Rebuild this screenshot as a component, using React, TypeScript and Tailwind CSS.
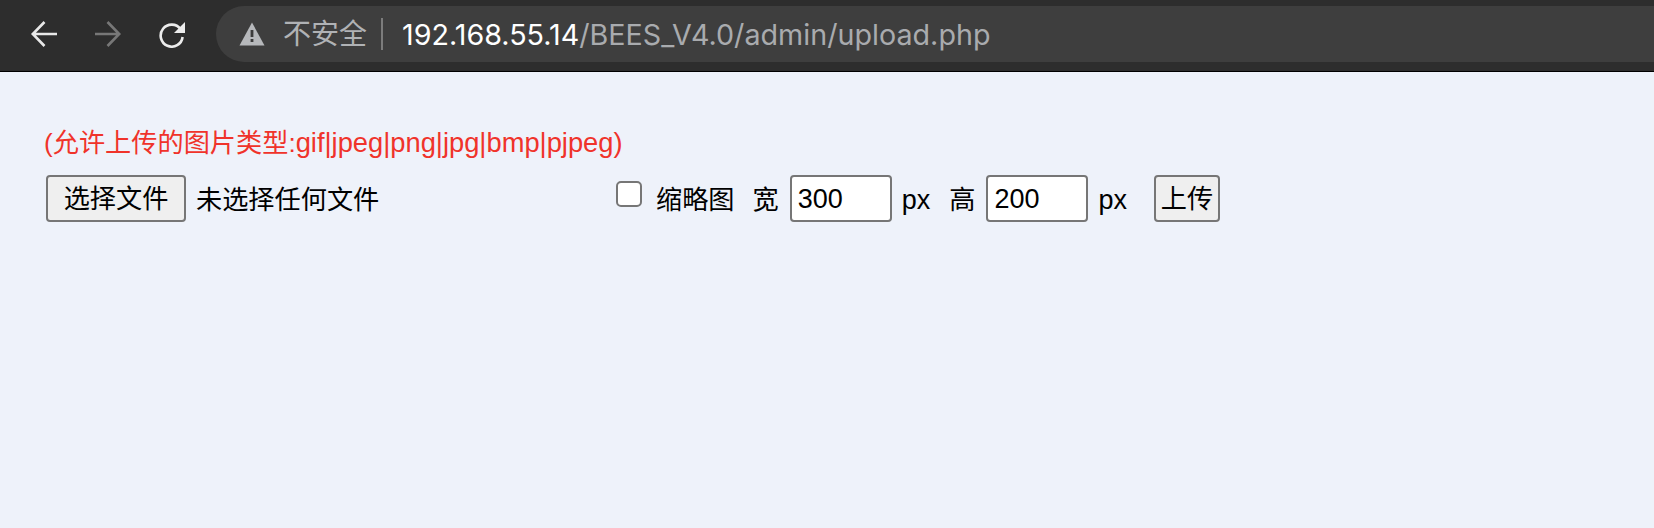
const cjk = "font-['Liberation_Sans','Noto_Sans_CJK_SC',sans-serif]";
const url = "font-['Inter','Liberation_Sans',sans-serif]";
const control = "h-[47px] rounded-[4px] border-2 border-[#767676]";

function Arrow({ flip, color }: { flip?: boolean; color: string }) {
  return (
    <svg viewBox="0 0 28 28" className={`h-7 w-7 ${flip ? "-scale-x-100" : ""}`} fill="none" stroke={color} strokeWidth="2.6">
      <path d="M27 14H3M14.5 2 2.8 14l11.7 12" />
    </svg>
  );
}

function Reload() {
  return (
    <svg viewBox="0 0 28 28" className="h-7 w-7" fill="none">
      <path d="M22.6 9.2A11 11 0 1 0 24.6 17" stroke="#ececec" strokeWidth="2.6" />
      <path d="M27 2v11H16z" fill="#ececec" />
    </svg>
  );
}

function Warning() {
  return (
    <svg viewBox="0 0 26 24" className="h-6 w-[26px]">
      <path d="M13 0.5 25.5 23.5H0.5z" fill="#b6b8bb" />
      <path d="M11.6 8h2.8v7h-2.8zM11.6 17h2.8v3h-2.8z" fill="#3c3c3c" />
    </svg>
  );
}

function Toolbar() {
  return (
    <header className="flex h-[72px] items-start border-b border-black bg-[#2d2d2d] pt-[6px]">
      <div className="flex h-[56px] w-[216px] shrink-0 items-center">
        <span className="ml-[30px] flex"><Arrow color="#e8e8e8" /></span>
        <span className="ml-[36px] flex"><Arrow flip color="#777777" /></span>
        <span className="ml-[36px] flex"><Reload /></span>
      </div>
      <div className="flex h-[56px] flex-1 items-center rounded-l-[28px] bg-[#3e3e3e] pl-[23px]">
        <Warning />
        <span className={`ml-[18px] pt-[2px] text-[28px] leading-none text-[#b0b2b5] ${cjk}`}>不安全</span>
        <span className="ml-[14px] h-8 w-[2px] bg-[#7c7c7c]" />
        <span className={`ml-[19px] pt-[2px] text-[28.7px] leading-none text-[#a9abae] ${url}`}>
          <span className="text-white">192.168.55.14</span>/BEES_V4.0/admin/upload.php
        </span>
      </div>
    </header>
  );
}

function UploadForm() {
  return (
    <main className={`flex-1 bg-[#eef2fa] pl-[42px] pt-[57px] text-[26.2px] leading-none text-black ${cjk}`}>
      <p className="ml-[2px] h-[25px] text-[#f0332a]">
        (允许上传的图片类型:<span className="text-[27.3px]">gif|jpeg|png|jpg|bmp|pjpeg)</span>
      </p>
      <form className="mt-[21px] flex items-center">
        <button type="button" className={`ml-[4px] w-[140px] bg-[#efefef] pt-[2px] ${control}`}>选择文件</button>
        <span className="ml-[10px] w-[420px] pt-[4px]">未选择任何文件</span>
        <input type="checkbox" className="mb-[10px] h-[26px] w-[26px] appearance-none rounded-[5px] border-2 border-[#767676] bg-white" />
        <span className="ml-[14px] pt-[4px]">缩略图</span>
        <span className="ml-[18px] pt-[4px]">宽</span>
        <input defaultValue="300" className={`ml-[11px] w-[102px] bg-white px-[6px] pt-[2px] text-[27px] outline-none ${control}`} />
        <span className="ml-[10px] pt-[4px] text-[27px]">px</span>
        <span className="ml-[19px] pt-[4px]">高</span>
        <input defaultValue="200" className={`ml-[11px] w-[102px] bg-white px-[6px] pt-[2px] text-[27px] outline-none ${control}`} />
        <span className="ml-[10px] pt-[4px] text-[27px]">px</span>
        <button type="button" className={`ml-[27px] w-[66px] bg-[#efefef] pt-[2px] ${control}`}>上传</button>
      </form>
    </main>
  );
}

export default function App() {
  return (
    <div className="flex h-[528px] w-[1654px] flex-col overflow-hidden">
      <Toolbar />
      <UploadForm />
    </div>
  );
}
